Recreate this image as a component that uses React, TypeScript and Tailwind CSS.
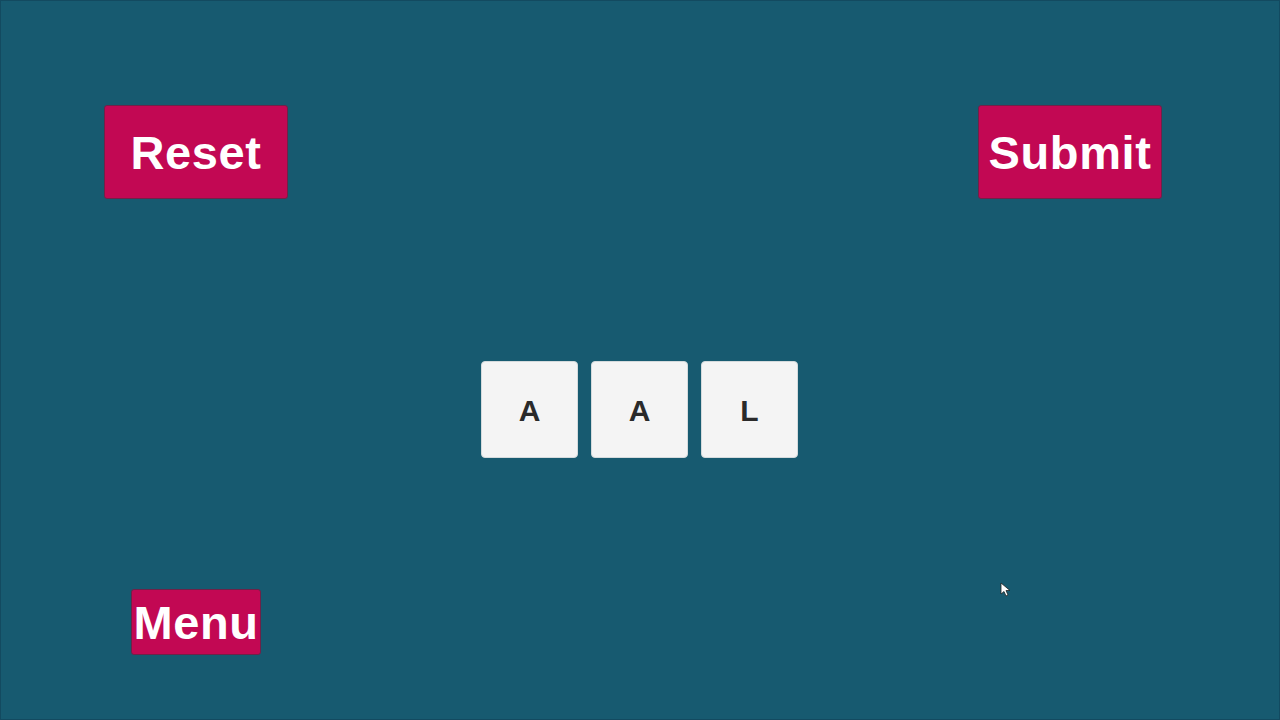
import React from "react";

const btn =
  "flex items-center justify-center bg-[#c20853] border border-[#6e2248] rounded-[3px] text-white text-[47px] font-bold leading-none tracking-[0.6px]";

function Tile({ ch }: { ch: string }) {
  return (
    <div className="w-[97px] h-[97px] bg-[#f4f4f4] border border-[#d4dadc] rounded-[4px] flex items-center justify-center pt-[2px] text-[30px] font-bold text-[#2a2a2a]">
      {ch}
    </div>
  );
}

export default function App() {
  return (
    <div
      className="relative w-[1280px] h-[720px] bg-[#175a70] border border-[#134a60] overflow-hidden"
      style={{ fontFamily: '"Liberation Sans", Arial, sans-serif' }}
    >
      <div className="flex justify-between pt-[104px] pl-[103px] pr-[117px]">
        <button className={`${btn} w-[184px] h-[94px]`}>Reset</button>
        <button className={`${btn} w-[184px] h-[94px]`}>Submit</button>
      </div>
      <div className="flex justify-center gap-[13px] mt-[162px] pr-[1px]">
        <Tile ch="A" />
        <Tile ch="A" />
        <Tile ch="L" />
      </div>
      <div className="mt-[131px] pl-[130px]">
        <button className={`${btn} w-[130px] h-[66px]`}>Menu</button>
      </div>
      <svg
        className="absolute left-[999px] top-[581px]"
        width="12"
        height="16"
        viewBox="0 0 12 16"
      >
        <path d="M1 1 L1 12 L4 9.5 L6 14 L8 13 L6 8.5 L10 8.5 Z" fill="white" stroke="#222" strokeWidth="0.8" />
      </svg>
    </div>
  );
}
